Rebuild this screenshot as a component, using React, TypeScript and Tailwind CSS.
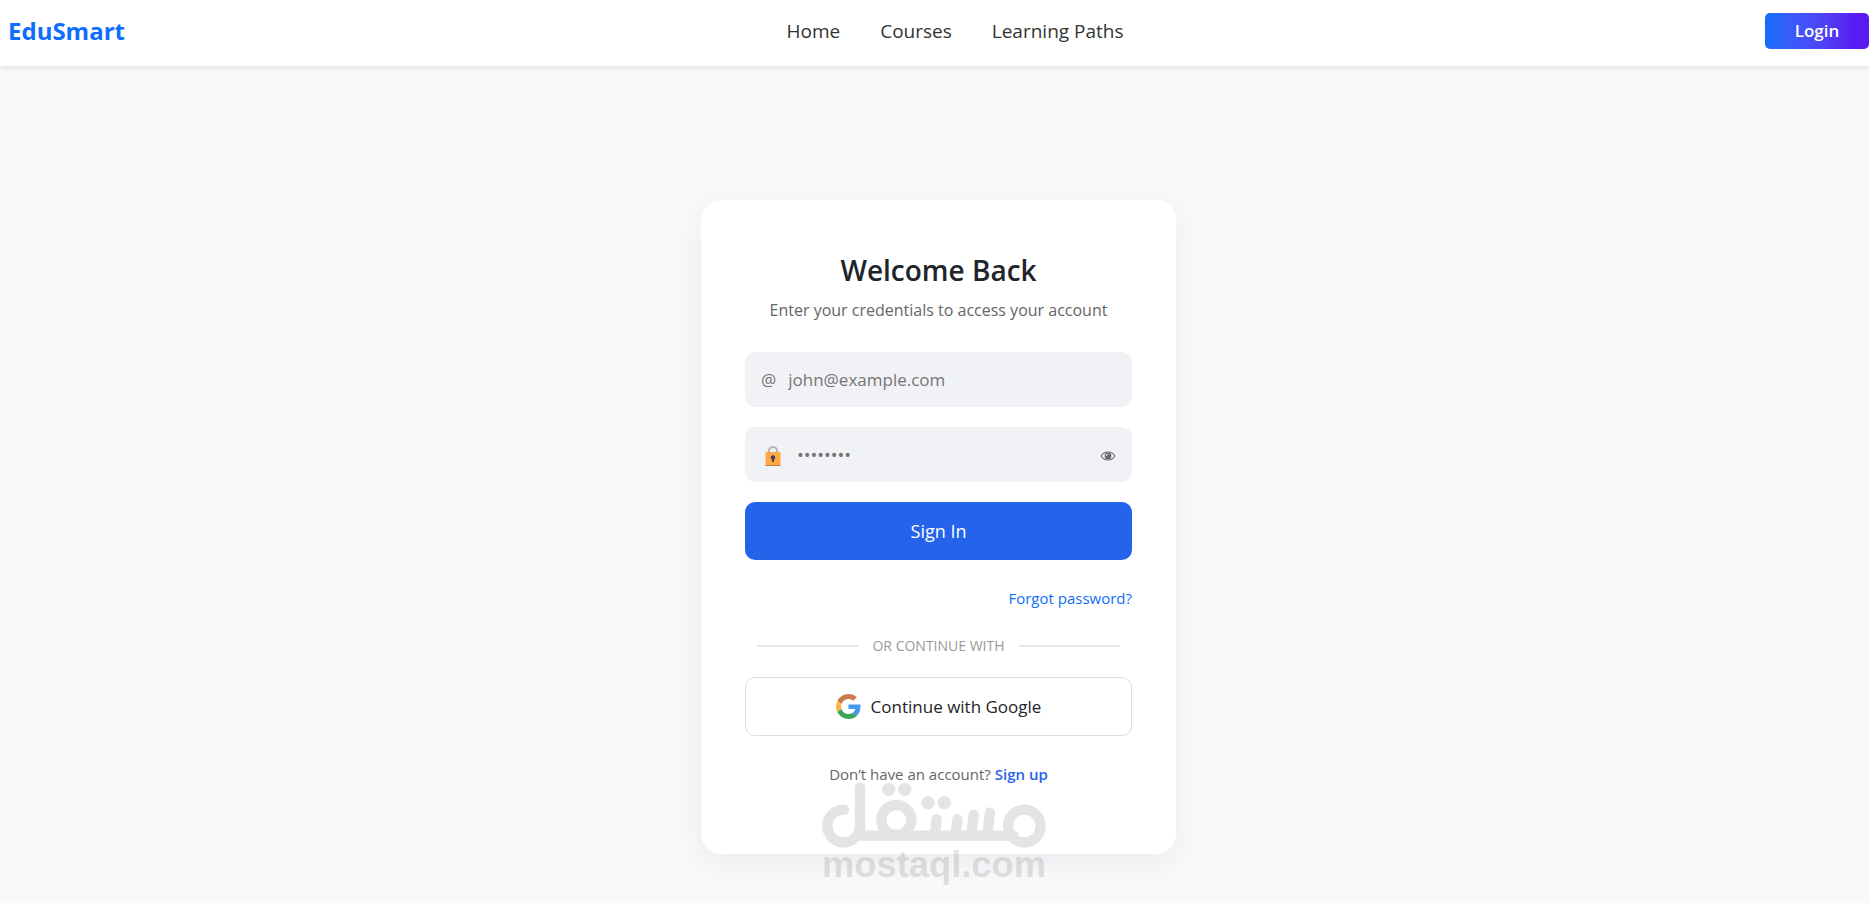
import { useState } from "react";

const navLinks = [
  { label: "Home", href: "#home" },
  { label: "Courses", href: "#courses" },
  { label: "Learning Paths", href: "#paths" },
];

function Header() {
  return (
    <header className="relative z-10 flex h-[66px] items-center justify-between bg-white pb-1 pl-2 shadow-[0_2px_6px_rgba(0,0,0,0.1)]">
      <a href="#home" className="text-2xl font-bold text-[#0d6efd]">
        EduSmart
      </a>

      <nav className="flex gap-10 pl-5">
        {navLinks.map((link) => (
          <a key={link.label} href={link.href} className="text-[19px] text-[#333]">
            {link.label}
          </a>
        ))}
      </nav>

      <button
        type="button"
        className="h-9 w-[104px] rounded-[5px] bg-linear-to-r from-[#0d6efd] to-[#5a1bf2] to-85% text-[17px] font-semibold text-white"
      >
        Login
      </button>
    </header>
  );
}

function LockIcon() {
  return (
    <svg width="24" height="20" viewBox="0 0 24 20" aria-hidden="true">
      <path d="M8 8V4.500a4 3.500 0 0 1 8 0V8" fill="none" stroke="#b4b4b8" strokeWidth="2" />
      <rect x="4.500" y="6" width="15" height="14" rx="1" fill="#ffa940" />
      <path d="M4.500 19h15a1 1 0 0 1-1 1h-13a1 1 0 0 1-1-1z" fill="#c8794a" />
      <circle cx="12" cy="11.500" r="2.200" fill="#45405a" />
      <rect x="11" y="12" width="2" height="4" fill="#45405a" />
    </svg>
  );
}

function EyeIcon() {
  return (
    <svg width="16" height="10" viewBox="0 0 16 10" fill="none" aria-hidden="true">
      <path
        d="M1 5C3 2 5.500 1 8 1s5 1 7 4c-2 3-4.500 4-7 4S3 8 1 5z"
        stroke="#666"
        strokeWidth="1.200"
      />
      <circle cx="8" cy="5" r="3.300" fill="#666" />
      <path d="M6.300 5.200A1.800 1.800 0 0 1 8.200 3.200" stroke="#f1f2f6" strokeWidth="1" />
    </svg>
  );
}

function GoogleIcon() {
  return (
    <svg width="25" height="25" viewBox="0 0 48 48" aria-hidden="true">
      <path
        fill="#cf7a4c"
        d="M24 9.500c3.540 0 6.710 1.220 9.210 3.600l6.850-6.850C35.900 2.380 30.470 0 24 0 14.620 0 6.510 5.380 2.560 13.220l7.980 6.190C12.430 13.720 17.740 9.500 24 9.500z"
      />
      <path
        fill="#4496ee"
        d="M46.980 24.550c0-1.570-.15-3.090-.38-4.550H24v9.020h12.940c-.58 2.960-2.260 5.480-4.780 7.180l7.730 6c4.510-4.180 7.090-10.360 7.090-17.650z"
      />
      <path
        fill="#ffb245"
        d="M10.530 28.590c-.48-1.450-.76-2.990-.76-4.590s.27-3.140.76-4.590l-7.980-6.190C.92 16.460 0 20.120 0 24c0 3.880.92 7.540 2.560 10.780l7.970-6.190z"
      />
      <path
        fill="#3aa757"
        d="M24 48c6.480 0 11.930-2.130 15.890-5.810l-7.730-6c-2.150 1.450-4.920 2.300-8.160 2.300-6.260 0-11.570-4.220-13.470-9.910l-7.980 6.190C6.510 42.620 14.620 48 24 48z"
      />
    </svg>
  );
}

function MostaqlLogo() {
  return (
    <svg
      width="226"
      height="104"
      viewBox="66 66 678 312"
      role="img"
      aria-label="mostaql.com"
      className="pointer-events-none absolute bottom-[17px] left-1/2 z-10 -translate-x-1/2"
    >
      <g opacity="0.1">
        <g fill="none" stroke="#000" strokeWidth="31" strokeLinecap="round">
          <circle cx="131" cy="198" r="49" strokeDasharray="231 308" />
          <line x1="180" y1="82" x2="180" y2="210" />
          <line x1="170" y1="227" x2="640" y2="227" />
          <circle cx="289" cy="180" r="45" />
          <line x1="410" y1="178" x2="405" y2="225" />
          <line x1="472" y1="178" x2="467" y2="225" />
          <line x1="521" y1="165" x2="514" y2="225" />
          <line x1="570" y1="158" x2="562" y2="225" />
          <circle cx="673" cy="198" r="49" />
        </g>
        <circle cx="266" cy="88" r="20" />
        <circle cx="314" cy="88" r="20" />
        <circle cx="384" cy="128" r="20" />
        <circle cx="433" cy="128" r="20" />
        <text
          x="402"
          y="352"
          textAnchor="middle"
          fontSize="109"
          className="font-['Liberation_Sans',sans-serif] font-bold"
        >
          mostaql.com
        </text>
      </g>
    </svg>
  );
}

function LoginCard() {
  const [email, setEmail] = useState("");
  const [password, setPassword] = useState("");
  const [showPassword, setShowPassword] = useState(false);

  const handleSubmit = (event: React.FormEvent<HTMLFormElement>) => {
    event.preventDefault();
  };

  return (
    <section className="w-full max-w-[475px] rounded-[20px] bg-white px-11 pt-12 pb-[68px] shadow-[0_8px_32px_rgba(0,0,0,0.06)]">
      <h1 className="text-center text-[28px] leading-11 font-semibold text-[#212529]">
        Welcome Back
      </h1>
      <p className="mt-1 text-center text-base leading-7 text-[#666]">
        Enter your credentials to access your account
      </p>

      <form onSubmit={handleSubmit} className="mt-7 flex flex-col gap-5">
        <div className="flex h-[55px] items-center gap-3 rounded-[10px] bg-[#f1f2f6] px-4">
          <label htmlFor="email" className="text-[17px] text-[#757575]">
            @
          </label>
          <input
            id="email"
            type="email"
            value={email}
            onChange={(event) => setEmail(event.target.value)}
            placeholder="john@example.com"
            className="min-w-0 flex-1 bg-transparent text-[17px] outline-none placeholder:text-[#757575]"
          />
        </div>

        <div className="flex h-[55px] items-center gap-3 rounded-[10px] bg-[#f1f2f6] px-4 pt-0.5">
          <label htmlFor="password" aria-label="Password">
            <LockIcon />
          </label>
          <input
            id="password"
            type={showPassword ? "text" : "password"}
            value={password}
            onChange={(event) => setPassword(event.target.value)}
            placeholder="••••••••"
            className="min-w-0 flex-1 bg-transparent text-[17px] outline-none placeholder:text-lg placeholder:text-[#757575]"
          />
          <button
            type="button"
            aria-label="Show password"
            onClick={() => setShowPassword(!showPassword)}
          >
            <EyeIcon />
          </button>
        </div>

        <button
          type="submit"
          className="h-[58px] rounded-[10px] bg-[#2563eb] text-lg text-white"
        >
          Sign In
        </button>
      </form>

      <div className="mt-[26px] text-right text-[15px] leading-6">
        <a href="#forgot" className="text-[#0d6efd]">
          Forgot password?
        </a>
      </div>

      <div className="mt-[26px] flex items-center gap-3.5 px-3">
        <span className="h-0.5 flex-1 bg-[#e6e6e6]" />
        <span className="text-sm leading-5 text-[#999]">OR CONTINUE WITH</span>
        <span className="h-0.5 flex-1 bg-[#e6e6e6]" />
      </div>

      <button
        type="button"
        className="mt-[21px] flex h-[59px] w-full items-center justify-center gap-2.5 rounded-[10px] border border-[#ddd] bg-white text-[17px] text-[#212529]"
      >
        <GoogleIcon />
        Continue with Google
      </button>

      <p className="mt-[26px] text-center text-[15px] leading-6 text-[#666]">
        Don’t have an account?{" "}
        <a href="#signup" className="font-semibold text-[#2563eb]">
          Sign up
        </a>
      </p>
    </section>
  );
}

export default function App() {
  return (
    <div className="relative flex min-h-screen flex-col bg-[#f9f9fb] font-['Open_Sans','Noto_Sans',sans-serif]">
      <Header />
      <main className="flex flex-1 items-start justify-center pt-[134px] pb-12 pl-2">
        <LoginCard />
      </main>
      <MostaqlLogo />
    </div>
  );
}
